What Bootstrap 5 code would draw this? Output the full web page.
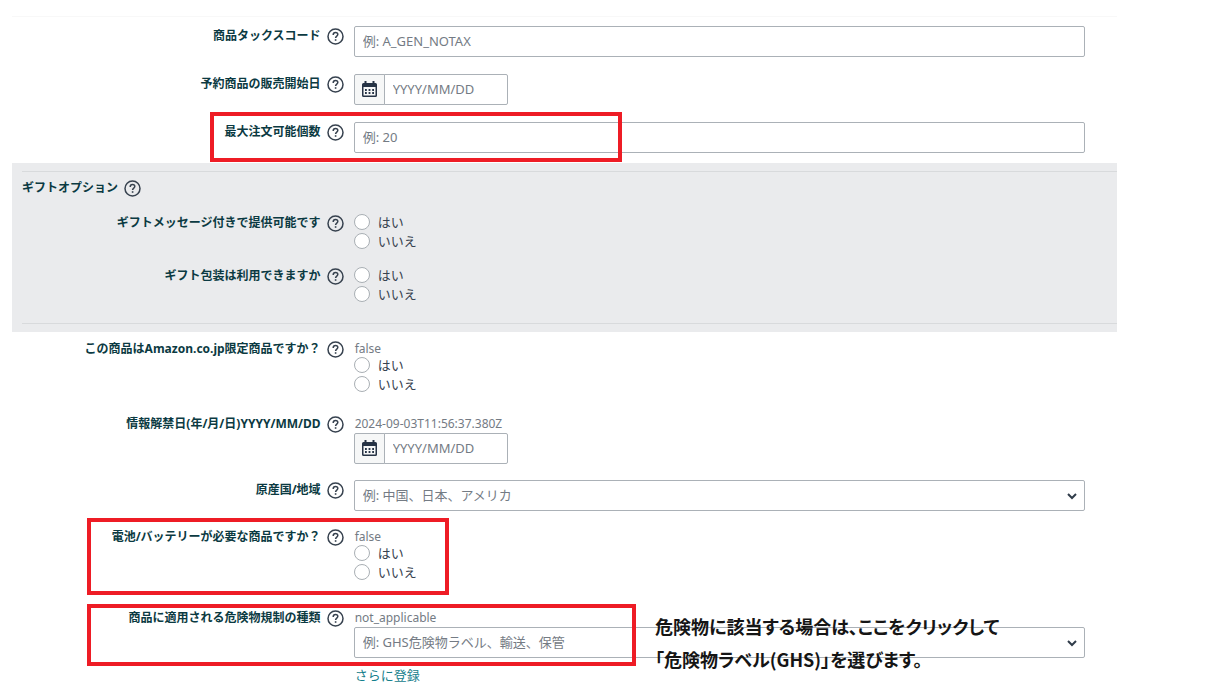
<!DOCTYPE html>
<html lang="ja">
<head>
<meta charset="utf-8">
<meta name="viewport" content="width=device-width, initial-scale=1">
<title>商品情報の登録</title>
<link href="https://cdn.jsdelivr.net/npm/bootstrap@5.3.0/dist/css/bootstrap.min.css" rel="stylesheet">
<style>
  :root { --ink: #0b3a42; --line: #abb1b7; --muted: #747b84; --alert: #ee1c25; }
  body { font-family: "Noto Sans", "Noto Sans CJK JP", sans-serif; font-size: 13px; line-height: 20px; color: #37424f; background: #fff; }
  .listing-form { margin: 16px 108px 0 12px; border-top: 1px solid #f8f8f8; padding-top: 9px; }
  .field-row { position: relative; display: grid; grid-template-columns: 31% minmax(0, 1fr); column-gap: 9px; margin-bottom: 17px; padding-right: 32px; }
  .field-name { display: flex; justify-content: flex-end; align-items: center; gap: 6px; height: 20px; padding-right: 1px; font-size: 12px; font-weight: 700; color: var(--ink); white-space: nowrap; }
  .help { flex: none; padding: 0; border: 0; background: none; line-height: 0; color: #37424f; }
  .help svg { width: 17px; height: 17px; }
  .field-row .form-control, .field-row .form-select { height: 31px; padding: 0 8px 2px; font-size: 13px; line-height: 20px; border: 1px solid var(--line); border-radius: 2px; color: var(--muted); background-color: #fff; }
  .field-row .form-control::placeholder { color: var(--muted); opacity: 1; }
  .field-row .form-select { background-image: url("data:image/svg+xml,%3Csvg xmlns='http://www.w3.org/2000/svg' viewBox='0 0 12 12'%3E%3Cpath d='M2 4l4 4 4-4' fill='none' stroke='%23303c4a' stroke-width='2'/%3E%3C/svg%3E"); background-size: 12px; background-position: right 6px center; }
  .date-group { width: 154px; }
  .date-group .btn { width: 31px; height: 31px; padding: 0; border: 1px solid var(--line); border-radius: 2px; background: #f6f7f7; line-height: 0; color: #263345; }
  .date-group svg { width: 15px; height: 17px; }
  .current-value { padding: 2px 0 0 1px; line-height: 15px; font-size: 12px; color: var(--muted); }
  .current-value + .form-select, .current-value + .date-group { margin-top: 2px; }
  .choice { display: flex; align-items: center; gap: 8px; height: 19px; padding-bottom: 1px; font-size: 13px; }
  .choice .form-check-input { width: 16px; height: 16px; margin: 0; border: 1px solid #a9afb4; background-color: #fff; }
  .gift-panel { margin: -7px 0 7px; padding: 8px 0; background: #eaebed; }
  .gift-panel hr { margin: 0 0 0 10px; border-color: #d8dadc; opacity: 1; }
  .gift-panel .field-name { justify-content: flex-start; margin: 6px 10px 15px; }
  .gift-panel .field-row .field-name { justify-content: flex-end; margin: 0; }
  .gift-panel .field-row { margin-bottom: 15px; }
  .gift-panel .field-row:last-of-type { margin-bottom: 19px; }
  .battery-row { margin-bottom: 26px; }
  .outlined::after { content: ""; position: absolute; border: 4px solid var(--alert); pointer-events: none; }
  .outline-quantity::after { left: 198px; top: -10px; width: 412px; height: 50px; }
  .outline-battery::after { left: 75px; top: -9px; width: 362px; height: 77px; }
  .outline-hazard::after { left: 75px; top: -4px; width: 549px; height: 62px; }
  .callout-note { position: absolute; left: 643px; top: 2px; margin: 0; font-family: "Noto Sans CJK JP", sans-serif; font-feature-settings: "palt"; font-size: 18px; font-weight: 700; line-height: 33px; color: #151515; white-space: nowrap; pointer-events: none; }
  .more-link { display: inline-block; margin: 7px 0 0 1px; color: #16808c; text-decoration: none; }
</style>
</head>
<body>
<svg class="d-none" aria-hidden="true">
  <symbol id="icon-help" viewBox="0 0 17 17">
    <circle cx="8.500" cy="8.500" r="7.500" fill="none" stroke="currentColor" stroke-width="1.500"/>
    <path d="M6.200 6.900C6.200 5.300 7.200 4.500 8.500 4.500s2.300.8 2.300 2.100c0 1.500-2.200 1.700-2.200 3.400" fill="none" stroke="currentColor" stroke-width="1.500"/>
    <rect x="7.800" y="11.200" width="1.600" height="1.600" fill="currentColor"/>
  </symbol>
  <symbol id="icon-calendar" viewBox="0 0 15 17">
    <path d="M2.500 0h2v2h6V0h2v2h1Q15 2 15 3.500v11q0 1.500-1.500 1.500h-12Q0 16 0 14.500v-11Q0 2 1.500 2h1zM1.500 6v8.500h12V6z" fill="currentColor" fill-rule="evenodd"/>
    <path d="M3 9h9M3 12h9" stroke="currentColor" stroke-width="1.800" stroke-dasharray="1.800 1.800"/>
  </symbol>
</svg>

<form class="listing-form">
  <div class="field-row">
    <div class="field-name"><label for="tax-code">商品タックスコード</label><button type="button" class="help" aria-label="ヘルプ"><svg><use href="#icon-help"/></svg></button></div>
    <div><input id="tax-code" class="form-control" type="text" placeholder="例: A_GEN_NOTAX"></div>
  </div>

  <div class="field-row">
    <div class="field-name"><label for="sale-date">予約商品の販売開始日</label><button type="button" class="help" aria-label="ヘルプ"><svg><use href="#icon-help"/></svg></button></div>
    <div>
      <div class="input-group date-group">
        <button type="button" class="btn" aria-label="カレンダー"><svg><use href="#icon-calendar"/></svg></button>
        <input id="sale-date" class="form-control" type="text" placeholder="YYYY/MM/DD">
      </div>
    </div>
  </div>

  <div class="field-row outlined outline-quantity">
    <div class="field-name"><label for="max-order">最大注文可能個数</label><button type="button" class="help" aria-label="ヘルプ"><svg><use href="#icon-help"/></svg></button></div>
    <div><input id="max-order" class="form-control" type="text" placeholder="例: 20"></div>
  </div>

  <section class="gift-panel">
    <hr>
    <div class="field-name"><span>ギフトオプション</span><button type="button" class="help" aria-label="ヘルプ"><svg><use href="#icon-help"/></svg></button></div>
    <div class="field-row" role="radiogroup" aria-labelledby="gift-message">
      <div class="field-name"><span id="gift-message">ギフトメッセージ付きで提供可能です</span><button type="button" class="help" aria-label="ヘルプ"><svg><use href="#icon-help"/></svg></button></div>
      <div>
        <label class="choice"><input class="form-check-input" type="radio" name="gift-message">はい</label>
        <label class="choice"><input class="form-check-input" type="radio" name="gift-message">いいえ</label>
      </div>
    </div>
    <div class="field-row" role="radiogroup" aria-labelledby="gift-wrap">
      <div class="field-name"><span id="gift-wrap">ギフト包装は利用できますか</span><button type="button" class="help" aria-label="ヘルプ"><svg><use href="#icon-help"/></svg></button></div>
      <div>
        <label class="choice"><input class="form-check-input" type="radio" name="gift-wrap">はい</label>
        <label class="choice"><input class="form-check-input" type="radio" name="gift-wrap">いいえ</label>
      </div>
    </div>
    <hr>
  </section>

  <div class="field-row mb-3" role="radiogroup" aria-labelledby="exclusive">
    <div class="field-name"><span id="exclusive">この商品はAmazon.co.jp限定商品ですか？</span><button type="button" class="help" aria-label="ヘルプ"><svg><use href="#icon-help"/></svg></button></div>
    <div class="pb-1">
      <div class="current-value">false</div>
      <label class="choice"><input class="form-check-input" type="radio" name="exclusive">はい</label>
      <label class="choice"><input class="form-check-input" type="radio" name="exclusive">いいえ</label>
    </div>
  </div>

  <div class="field-row mb-3">
    <div class="field-name"><label for="release-date">情報解禁日(年/月/日)YYYY/MM/DD</label><button type="button" class="help" aria-label="ヘルプ"><svg><use href="#icon-help"/></svg></button></div>
    <div>
      <div class="current-value">2024-09-03T11:56:37.380Z</div>
      <div class="input-group date-group">
        <button type="button" class="btn" aria-label="カレンダー"><svg><use href="#icon-calendar"/></svg></button>
        <input id="release-date" class="form-control" type="text" placeholder="YYYY/MM/DD">
      </div>
    </div>
  </div>

  <div class="field-row mb-3">
    <div class="field-name"><label for="origin">原産国/地域</label><button type="button" class="help" aria-label="ヘルプ"><svg><use href="#icon-help"/></svg></button></div>
    <div><select id="origin" class="form-select"><option>例: 中国、日本、アメリカ</option></select></div>
  </div>

  <div class="field-row battery-row outlined outline-battery" role="radiogroup" aria-labelledby="battery">
    <div class="field-name"><span id="battery">電池/バッテリーが必要な商品ですか？</span><button type="button" class="help" aria-label="ヘルプ"><svg><use href="#icon-help"/></svg></button></div>
    <div>
      <div class="current-value">false</div>
      <label class="choice"><input class="form-check-input" type="radio" name="battery">はい</label>
      <label class="choice"><input class="form-check-input" type="radio" name="battery">いいえ</label>
    </div>
  </div>

  <div class="field-row mb-0 outlined outline-hazard">
    <div class="field-name"><label for="hazard">商品に適用される危険物規制の種類</label><button type="button" class="help" aria-label="ヘルプ"><svg><use href="#icon-help"/></svg></button></div>
    <div>
      <div class="current-value">not_applicable</div>
      <select id="hazard" class="form-select"><option>例: GHS危険物ラベル、輸送、保管</option></select>
      <a class="more-link" href="#">さらに登録</a>
    </div>
    <p class="callout-note">危険物に該当する場合は、ここをクリックして<br>「危険物ラベル(GHS)」を選びます。</p>
  </div>
</form>
<script src="https://cdn.jsdelivr.net/npm/bootstrap@5.3.0/dist/js/bootstrap.bundle.min.js"></script>
</body>
</html>
